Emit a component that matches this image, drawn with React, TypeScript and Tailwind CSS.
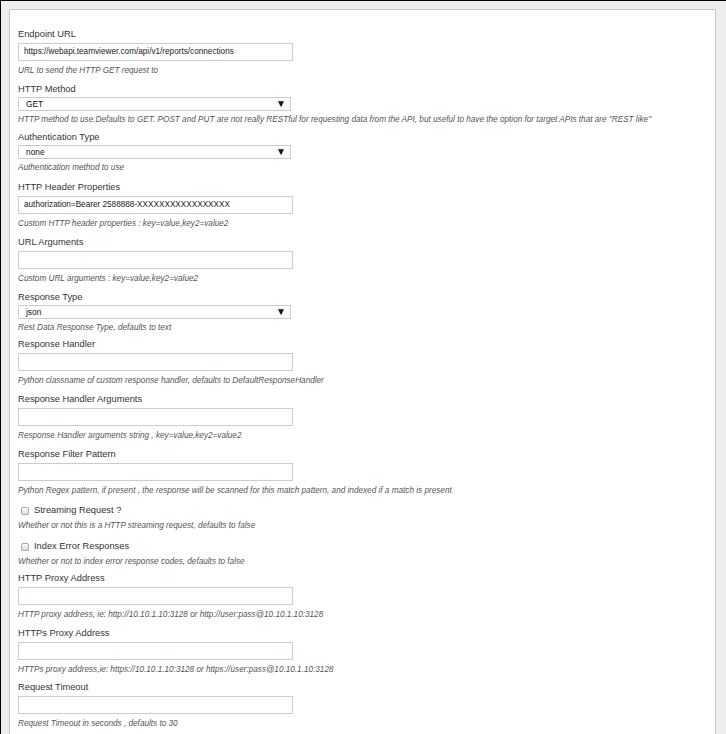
import React from "react";

type FieldProps = {
  label: string;
  help: string;
  value?: string;
  kind?: "input" | "select";
  mb?: string;
};

function Field({ label, help, value = "", kind = "input", mb = "mb-[4px]" }: FieldProps) {
  return (
    <div className={mb}>
      <div className="h-[16px] text-[9.3px] leading-[16px] text-[#333]">{label}</div>
      {kind === "input" ? (
        <div className="mt-[1px] flex h-[18px] w-[275px] items-center border border-[#ccc] bg-white pl-[5px] text-[8.2px] text-[#222]">
          {value}
        </div>
      ) : (
        <div className="flex h-[14px] w-[273px] items-center justify-between border border-[#ccc] bg-white pl-[7px] pr-[4px] text-[8.4px] text-[#111]">
          <span>{value}</span>
          <span className="text-[10px] leading-none">▼</span>
        </div>
      )}
      <div className={`${kind === "input" ? "mt-[4px]" : "mt-[3px]"} h-[12px] whitespace-nowrap text-[8.2px] italic leading-[12px] text-[#555]`}>
        {help}
      </div>
    </div>
  );
}

function Check({ label, help, mb }: { label: string; help: string; mb: string }) {
  return (
    <div className={mb}>
      <div className="flex h-[16px] items-center text-[9.3px] text-[#333]">
        <span className="ml-[3px] mr-[5px] h-[8px] w-[8px] rounded-[2px] border border-[#a8a8a8] bg-gradient-to-b from-[#fdfdfd] to-[#dcdcdc]" />
        {label}
      </div>
      <div className="mt-[1px] h-[12px] text-[8.2px] italic leading-[12px] text-[#555]">{help}</div>
    </div>
  );
}

export default function App() {
  return (
    <div className="h-[734px] w-[726px] overflow-hidden border-l border-t border-black bg-[#eeeeee] font-['Liberation_Sans',Arial,sans-serif]">
      <div className="ml-[8px] mt-[8px] h-[740px] w-[707px] border border-[#c8c8c8] bg-white pl-[8px] pt-[16px]">
        <Field
          label="Endpoint URL"
          value="https://webapi.teamviewer.com/api/v1/reports/connections"
          help="URL to send the HTTP GET request to"
        />
        <Field
          label="HTTP Method"
          kind="select"
          value="GET"
          mb="mb-[3px]"
          help={'HTTP method to use.Defaults to GET. POST and PUT are not really RESTful for requesting data from the API, but useful to have the option for target APIs that are "REST like"'}
        />
        <Field
          label="Authentication Type"
          kind="select"
          value="none"
          mb="mb-[5px]"
          help="Authentication method to use"
        />
        <Field
          label="HTTP Header Properties"
          value="authorization=Bearer 2588888-XXXXXXXXXXXXXXXXX"
          help="Custom HTTP header properties : key=value,key2=value2"
        />
        <Field label="URL Arguments" help="Custom URL arguments : key=value,key2=value2" />
        <Field
          label="Response Type"
          kind="select"
          value="json"
          mb="mb-[2px]"
          help="Rest Data Response Type, defaults to text"
        />
        <Field
          label="Response Handler"
          help="Python classname of custom response handler, defaults to DefaultResponseHandler"
        />
        <Field
          label="Response Handler Arguments"
          help="Response Handler arguments string , key=value,key2=value2"
        />
        <Field
          label="Response Filter Pattern"
          mb="mb-[6px]"
          help="Python Regex pattern, if present , the response will be scanned for this match pattern, and indexed if a match is present"
        />
        <Check
          label="Streaming Request ?"
          mb="mb-[7px]"
          help="Whether or not this is a HTTP streaming request, defaults to false"
        />
        <Check
          label="Index Error Responses"
          mb="mb-[2px]"
          help="Whether or not to index error response codes, defaults to false"
        />
        <Field
          label="HTTP Proxy Address"
          help="HTTP proxy address, ie: http://10.10.1.10:3128 or http://user:pass@10.10.1.10:3128"
        />
        <Field
          label="HTTPs Proxy Address"
          mb="mb-[3px]"
          help="HTTPs proxy address,ie: https://10.10.1.10:3128 or https://user:pass@10.10.1.10:3128"
        />
        <Field label="Request Timeout" help="Request Timeout in seconds , defaults to 30" />
      </div>
    </div>
  );
}
